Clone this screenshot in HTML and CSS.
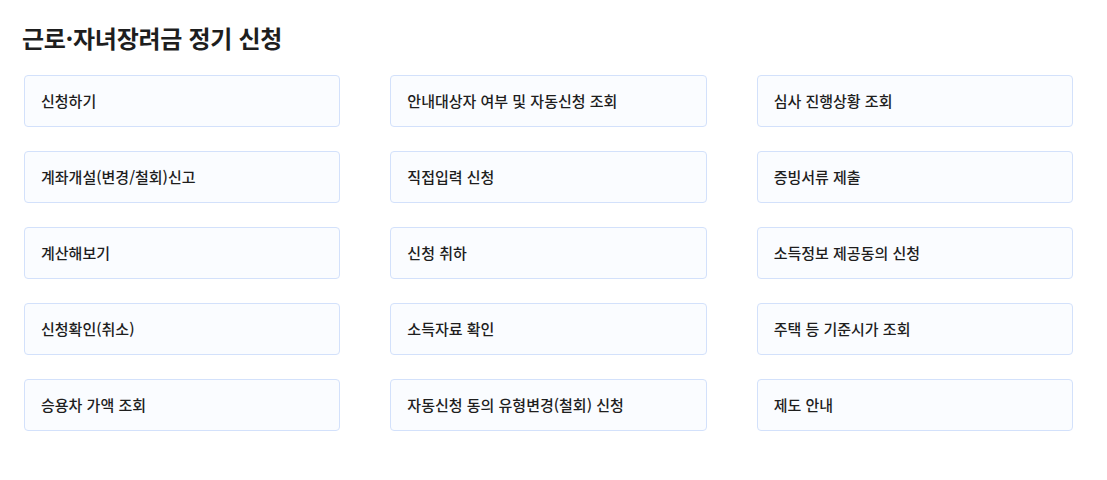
FILE: index.html
```html
<!DOCTYPE html>
<html lang="ko">
<head>
<meta charset="utf-8">
<title>근로·자녀장려금 정기 신청</title>
<link rel="stylesheet" href="styles.css">
</head>
<body>
<main class="page">
  <h1 class="title">근로·자녀장려금 정기 신청</h1>
  <div class="grid">
    <a class="card" href="#">신청하기</a>
    <a class="card" href="#">안내대상자 여부 및 자동신청 조회</a>
    <a class="card" href="#">심사 진행상황 조회</a>
    <a class="card" href="#">계좌개설(변경/철회)신고</a>
    <a class="card" href="#">직접입력 신청</a>
    <a class="card" href="#">증빙서류 제출</a>
    <a class="card" href="#">계산해보기</a>
    <a class="card" href="#">신청 취하</a>
    <a class="card" href="#">소득정보 제공동의 신청</a>
    <a class="card" href="#">신청확인(취소)</a>
    <a class="card" href="#">소득자료 확인</a>
    <a class="card" href="#">주택 등 기준시가 조회</a>
    <a class="card" href="#">승용차 가액 조회</a>
    <a class="card" href="#">자동신청 동의 유형변경(철회) 신청</a>
    <a class="card" href="#">제도 안내</a>
  </div>
</main>
</body>
</html>
```
FILE: styles.css
```css
* { box-sizing: border-box; }
html, body { margin: 0; padding: 0; background: #fff; }
body {
  font-family: "Noto Sans CJK KR", "Noto Sans", sans-serif;
  color: #222;
}
.page {
  padding: 20px 34px 0 24px;
}
.title {
  margin: 0 0 19px -2px;
  font-size: 24px;
  line-height: 36px;
  font-weight: 700;
  letter-spacing: -0.3px;
  color: #1e1e1e;
}
.grid {
  display: grid;
  grid-template-columns: repeat(3, 1fr);
  column-gap: 50px;
  row-gap: 24px;
}
.card {
  display: flex;
  align-items: center;
  height: 52px;
  padding: 0 16px 2px;
  border: 1px solid #d3e1fb;
  border-radius: 4px;
  background: #fafcff;
  color: #1e1e1e;
  text-decoration: none;
  font-size: 15px;
  font-weight: 500;
}
```
